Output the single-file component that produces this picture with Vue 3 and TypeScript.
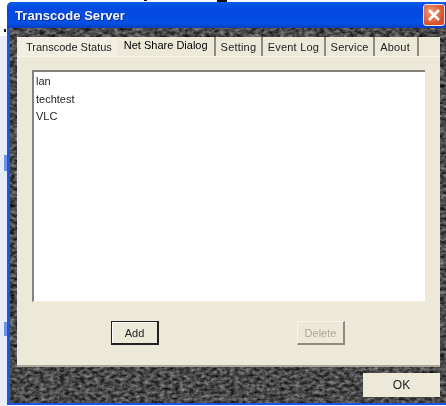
<script setup lang="ts">
const tabs = ['Transcode Status', 'Net Share Dialog', 'Setting', 'Event Log', 'Service', 'About']
const active = 'Net Share Dialog'
const shares = ['lan', 'techtest', 'VLC']
</script>

<template>
  <div class="page">
    <div class="window">
      <div class="titlebar">
        <span class="title">Transcode Server</span>
        <span class="close">
          <svg width="16" height="16" viewBox="0 0 16 16">
            <path d="M3 3 L13 13 M13 3 L3 13" stroke="#fff" stroke-width="2.6" fill="none" />
          </svg>
        </span>
      </div>
      <div class="client">
        <svg class="grain" width="100%" height="100%">
          <filter id="granite" x="0" y="0" width="100%" height="100%" color-interpolation-filters="sRGB">
            <feTurbulence type="fractalNoise" baseFrequency="0.2 0.3" numOctaves="4" seed="11" />
            <feColorMatrix type="matrix" values="0.7 0 0 0 -0.06 0.7 0 0 0 -0.06 0.7 0 0 0 -0.06 0 0 0 0 1" />
          </filter>
          <rect width="100%" height="100%" filter="url(#granite)" />
        </svg>
        <div class="panel">
          <div class="tabs">
            <span v-for="tab in tabs" :key="tab" class="tab" :class="{ on: tab === active }">{{ tab }}</span>
          </div>
          <div class="page-body">
            <ul class="list">
              <li v-for="s in shares" :key="s">{{ s }}</li>
            </ul>
            <div class="actions">
              <button class="btn add">Add</button>
              <button class="btn del" disabled>Delete</button>
            </div>
          </div>
        </div>
        <div class="footer">
          <button class="ok">OK</button>
        </div>
      </div>
    </div>
  </div>
</template>

<style>
html, body { margin: 0; background: #fff; overflow: hidden; }
</style>

<style scoped>
.page {
  width: 446px;
  height: 406px;
  padding: 2px 0 0 7px;
  box-sizing: border-box;
  font-family: "Liberation Sans", Arial, sans-serif;
  font-size: 11px;
  color: #111;
  overflow: hidden;
  background:
    linear-gradient(#111, #111) 144px 0 / 3px 1px no-repeat,
    linear-gradient(#111, #111) 217px 0 / 10px 2px no-repeat,
    linear-gradient(#111, #111) 4px 29px / 2px 3px no-repeat,
    linear-gradient(#6f93e0, #6f93e0) 4px 322px / 3px 14px no-repeat,
    linear-gradient(#6f93e0, #6f93e0) 4px 155px / 3px 16px no-repeat,
    linear-gradient(#fff 36px, #e6ecf8 36px) 0 0 / 7px 100% no-repeat,
    #fff;
}
.window {
  width: 439px;
  height: 403px;
  background: #1a56e0;
  padding: 0 0 2px 3px;
  box-sizing: border-box;
  border-radius: 5px 0 0 0;
  display: flex;
  flex-direction: column;
  filter: blur(0.35px);
}
.titlebar {
  height: 26px;
  margin: 0 0 0 -3px;
  padding: 0 1px 0 8px;
  flex: none;
  display: flex;
  align-items: center;
  justify-content: space-between;
  background: linear-gradient(#0a5ae8, #0348e0 30%, #0450e6 80%, #0a3fc0);
  border-radius: 5px 0 0 0;
}
.title {
  color: #eef3ff;
  font: bold 13px "Liberation Sans", Arial, sans-serif;
  letter-spacing: 0.05px;
  text-shadow: 1px 1px 0 #0a2c90;
}
.close {
  width: 22px;
  height: 22px;
  background: radial-gradient(circle at 35% 35%, #f09a78, #d94f26 70%);
  border: 1px solid #e8e8e8;
  border-radius: 3px;
  box-sizing: border-box;
  display: flex;
  align-items: center;
  justify-content: center;
}
.client {
  position: relative;
  flex: 1;
  padding: 9px 6px 0 7px;
  display: flex;
  flex-direction: column;
  background: #444;
  overflow: hidden;
}
.grain {
  position: absolute;
  inset: 0;
}
.panel {
  position: relative;
  height: 330px;
  background: #ece9d8;
  border-bottom: 2px solid #aca899;
  box-sizing: border-box;
  display: flex;
  flex-direction: column;
}
.tabs {
  height: 19px;
  padding-left: 2px;
  display: flex;
  align-items: stretch;
  flex: none;
}
.tab {
  display: flex;
  align-items: center;
  padding: 0 4.5px 0 5px;
  letter-spacing: 0.2px;
  white-space: nowrap;
  border-right: 2px solid #8e8c80;
  color: #222;
}
.tab:first-child {
  border-right: none;
  padding: 0 5px 0 7px;
  letter-spacing: 0;
  background: #f2efe2;
}
.tab.on {
  color: #000;
  letter-spacing: 0;
  padding: 0 6px 3px 7px;
}
.tab:last-child {
  padding-right: 7px;
}
.page-body {
  flex: 1;
  padding: 13px 15px 0 15px;
  border-top: 1px solid #f8f6ec;
  display: flex;
  flex-direction: column;
}
.list {
  margin: 0;
  padding: 1px 0 0 2px;
  list-style: none;
  height: 232px;
  flex: none;
  box-sizing: border-box;
  background: #fff;
  border-top: 2px solid #85837a;
  border-left: 2px solid #85837a;
  border-bottom: 1px solid #f4f2e6;
}
.list li {
  height: 17.5px;
  line-height: 17px;
  font-size: 11px;
  color: #222;
}
.actions {
  display: flex;
  justify-content: space-between;
  padding: 19px 80px 0 79px;
}
.btn {
  width: 48px;
  height: 24px;
  padding: 0;
  font: 11px "Liberation Sans", Arial, sans-serif;
  background: #ece9d8;
  box-sizing: border-box;
}
.add {
  border: 1px solid #222;
  border-right-width: 2px;
  border-bottom-width: 2px;
  box-shadow: inset 1px 1px 0 #fff;
  color: #222;
}
.del {
  border: 1px solid;
  border-color: #f8f6ec #8e8c80 #8e8c80 #f8f6ec;
  border-right-width: 2px;
  border-bottom-width: 2px;
  color: #aca899;
}
.footer {
  position: relative;
  display: flex;
  justify-content: flex-end;
  padding-top: 6px;
}
.ok {
  width: 77px;
  height: 24px;
  padding: 0;
  border: none;
  background: #ece9d8;
  color: #222;
  font: 12px "Liberation Sans", Arial, sans-serif;
}
</style>
